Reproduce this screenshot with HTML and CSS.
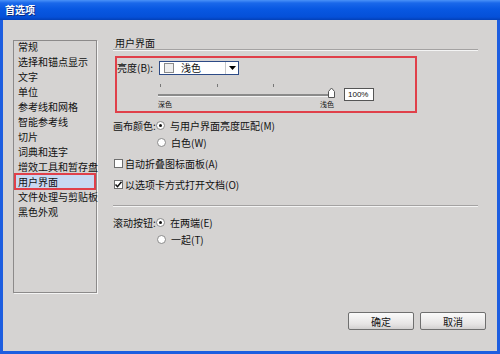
FILE: index.html
```html
<!DOCTYPE html>
<html lang="zh">
<head>
    <meta charset="UTF-8">
    <title>首选项</title>
    <link rel="stylesheet" href="styles.css">
</head>
<body>
    <div class="window">
        <div class="titlebar">首选项</div>
        <div class="client">
            <div class="panes">
                <ul class="category-list">
                    <li>常规</li>
                    <li>选择和锚点显示</li>
                    <li>文字</li>
                    <li>单位</li>
                    <li>参考线和网格</li>
                    <li>智能参考线</li>
                    <li>切片</li>
                    <li>词典和连字</li>
                    <li>增效工具和暂存盘</li>
                    <li class="selected">用户界面</li>
                    <li>文件处理与剪贴板</li>
                    <li>黑色外观</li>
                </ul>

                <div class="settings">
                    <div class="section-title">用户界面</div>

                    <div class="brightness-box">
                        <div class="brightness-row">
                            <span class="field-label">亮度(B):</span>
                            <div class="dropdown">
                                <span class="swatch"></span>
                                <span class="dropdown-text">浅色</span>
                                <span class="dropdown-arrow">
                                    <svg width="7" height="4" viewBox="0 0 7 4"><path d="M0 0h7L3.5 4z" fill="#000"/></svg>
                                </span>
                            </div>
                        </div>
                        <div class="slider-row">
                            <div class="slider">
                                <svg width="180" height="16" viewBox="0 0 180 16">
                                    <g stroke="#777" stroke-width="1">
                                        <line x1="2.5" y1="1" x2="2.5" y2="4"/>
                                        <line x1="59.5" y1="1" x2="59.5" y2="4"/>
                                        <line x1="115.5" y1="1" x2="115.5" y2="4"/>
                                    </g>
                                    <rect x="0" y="11" width="174" height="2" fill="#8a8a8a"/>
                                    <rect x="0" y="13" width="174" height="1" fill="#f2f2f2"/>
                                    <path d="M170.5 14.5v-6l3-3.5 3 3.5v6z" fill="#fff" stroke="#555"/>
                                </svg>
                                <div class="slider-labels">
                                    <span>深色</span>
                                    <span>浅色</span>
                                </div>
                            </div>
                            <div class="value-box">100%</div>
                        </div>
                    </div>

                    <div class="option-row first">
                        <span class="field-label">画布颜色:</span>
                        <span class="radio checked"></span>
                        <span>与用户界面亮度匹配(M)</span>
                    </div>
                    <div class="option-row indent">
                        <span class="radio"></span>
                        <span>白色(W)</span>
                    </div>

                    <div class="check-row">
                        <span class="checkbox"></span>
                        <span>自动折叠图标面板(A)</span>
                    </div>
                    <div class="check-row">
                        <span class="checkbox">
                            <svg width="9" height="9" viewBox="0 0 9 9"><path d="M1.5 4.5l2 2.2 4-5" fill="none" stroke="#111" stroke-width="1.5"/></svg>
                        </span>
                        <span>以选项卡方式打开文档(O)</span>
                    </div>

                    <div class="divider"></div>

                    <div class="option-row">
                        <span class="field-label">滚动按钮:</span>
                        <span class="radio checked"></span>
                        <span>在两端(E)</span>
                    </div>
                    <div class="option-row indent">
                        <span class="radio"></span>
                        <span>一起(T)</span>
                    </div>
                </div>
            </div>

            <div class="footer">
                <button class="dialog-button">确定</button>
                <button class="dialog-button">取消</button>
            </div>
        </div>
    </div>
</body>
</html>
```

FILE: styles.css
```css
body {
    margin: 0;
    font-family: "Noto Sans CJK SC", "Liberation Sans", sans-serif;
    font-size: 10px;
    color: #111;
}
.window {
    width: 500px;
    height: 354px;
    display: flex;
    flex-direction: column;
    overflow: hidden;
}
.titlebar {
    height: 20px;
    line-height: 20px;
    padding-left: 5px;
    color: #fff;
    font-weight: bold;
    font-size: 10px;
    text-shadow: 1px 1px 0 #0a2a80;
    background: linear-gradient(#4a92f8 0, #1a68ea 3px, #0858e2 45%, #0550d8 85%, #0340b8 100%);
}
.client {
    flex: 1;
    display: flex;
    flex-direction: column;
    background: #d5d3d2;
    border-left: 3px solid #1d5ee0;
    border-right: 3px solid #1d5ee0;
    border-bottom: 3px solid #1d5ee0;
}
.panes {
    display: flex;
    padding: 16px 0 0 10px;
}

/* left category list */
.category-list {
    list-style: none;
    margin: 4px 0 0 0;
    padding: 0 1px;
    width: 84px;
    height: 253px;
    box-sizing: border-box;
    border: 1px solid #8c8a8a;
    box-shadow: 1px 1px 0 #f4f4f4;
}
.category-list li {
    line-height: 15px;
    height: 15px;
    padding-left: 3px;
    white-space: nowrap;
    position: relative;
    top: -2px;
}
.category-list .selected {
    background: #c8d8f2;
    outline: 2px solid #e0404a;
    outline-offset: -1px;
}

/* right settings */
.settings {
    margin-left: 16px;
    width: 365px;
}
.section-title {
    line-height: 13px;
    padding-left: 2px;
    border-bottom: 1px solid #a4a2a2;
    box-shadow: 0 1px 0 #f4f4f4;
}
.brightness-box {
    margin: 6px 0 0 2px;
    width: 302px;
    height: 57px;
    box-sizing: border-box;
    border: 2px solid #e0404a;
}
.brightness-row {
    display: flex;
    align-items: center;
    margin-top: 2px;
}
.field-label {
    width: 42px;
    white-space: nowrap;
}
.dropdown {
    width: 80px;
    height: 14px;
    box-sizing: border-box;
    border: 1px solid #2c4a86;
    background: #fff;
    display: flex;
    align-items: center;
}
.swatch {
    width: 8px;
    height: 8px;
    margin-left: 4px;
    border: 1px solid #8a8a8a;
    background: #eeeeee;
}
.dropdown-text {
    margin-left: 7px;
    flex: 1;
    line-height: 12px;
}
.dropdown-arrow {
    width: 12px;
    height: 12px;
    border-left: 1px solid #c8c8c8;
    display: flex;
    align-items: center;
    justify-content: center;
}
.slider-row {
    display: flex;
    margin: 8px 0 0 41px;
}
.slider svg {
    display: block;
}
.slider-labels {
    width: 176px;
    display: flex;
    justify-content: space-between;
    font-size: 7px;
    line-height: 9px;
    margin-top: 1px;
}
.value-box {
    margin: 5px 0 0 6px;
    width: 30px;
    height: 13px;
    box-sizing: border-box;
    border: 1px solid #555;
    background: #fff;
    font-family: "Liberation Sans", sans-serif;
    font-size: 8px;
    line-height: 11px;
    padding-left: 3px;
}
.option-row {
    display: flex;
    align-items: center;
    line-height: 15px;
    margin-top: 2px;
}
.option-row.first {
    margin-top: 5px;
}
.option-row.indent {
    padding-left: 43px;
}
.radio {
    width: 9px;
    height: 9px;
    box-sizing: border-box;
    border: 1px solid #8a8a8a;
    border-radius: 50%;
    background: #fff;
    margin: 0 5px 0 1px;
    display: flex;
    align-items: center;
    justify-content: center;
}
.radio.checked::after {
    content: "";
    width: 3px;
    height: 3px;
    border-radius: 50%;
    background: #111;
}
.check-row {
    display: flex;
    align-items: center;
    line-height: 15px;
    margin-top: 6px;
    padding-left: 1px;
}
.checkbox {
    width: 9px;
    height: 9px;
    box-sizing: border-box;
    border: 1px solid #6e6e6e;
    background: #fff;
    margin-right: 2px;
    display: flex;
    align-items: center;
    justify-content: center;
}
.checkbox svg {
    display: block;
    margin: -1px;
}
.divider {
    margin: 13px 0 9px 0;
    border-top: 1px solid #a4a2a2;
    box-shadow: 0 1px 0 #f4f4f4;
}
.footer {
    margin-top: auto;
    display: flex;
    justify-content: flex-end;
    gap: 6px;
    padding: 0 11px 21px 0;
}
.dialog-button {
    width: 66px;
    height: 18px;
    padding: 0;
    font-family: inherit;
    font-size: 10px;
    color: #111;
    border: 1px solid #6f6f6f;
    border-radius: 2px;
    background: linear-gradient(#fafafa, #e6e4e4 70%, #d2d0d0);
}
```
